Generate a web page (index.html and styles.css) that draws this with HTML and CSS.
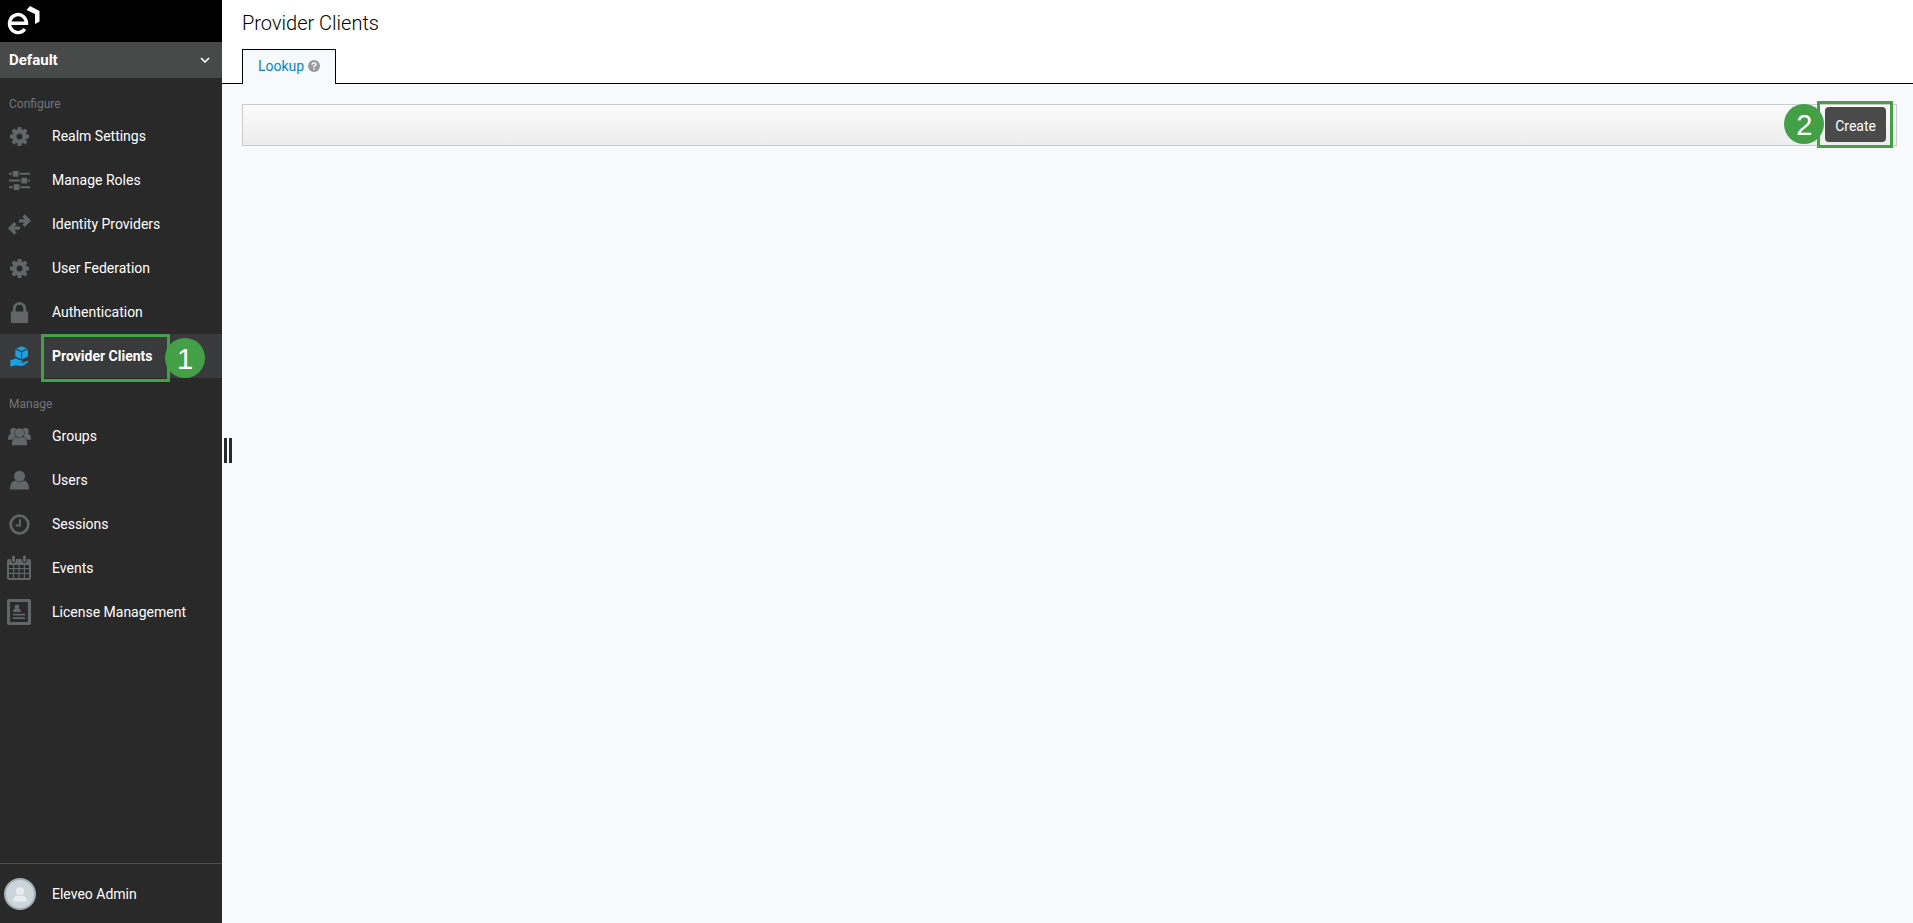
FILE: index.html
```html
<!DOCTYPE html>
<html lang="en">
<head>
    <meta charset="UTF-8">
    <meta name="viewport" content="width=device-width, initial-scale=1.0">
    <title>Provider Clients</title>
    <link rel="stylesheet" href="styles.css">
</head>
<body>
    <!-- Shared icon shapes -->
    <svg class="icon-defs" aria-hidden="true">
        <symbol id="icon-cog" viewBox="0 0 20 20">
            <circle cx="10" cy="10" r="5.300" fill="none" stroke="currentColor" stroke-width="4.400"/>
            <path d="M8.200 0h3.600l.7 4h-5zM8.200 20h3.600l.7-4h-5zM0 8.200v3.600l4 .7v-5zM20 8.200v3.600l-4 .7v-5zM1.700 4.200l2.500-2.500 3.300 2.300L4 7.500zM18.300 4.200l-2.500-2.500L12.500 4 16 7.500zM1.700 15.800l2.500 2.500L7.500 16 4 12.500zM18.300 15.800l-2.500 2.500-3.300-2.300 3.500-3.500z"/>
        </symbol>
    </svg>

    <aside class="sidebar">
        <a class="logo" href="#" aria-label="Eleveo">
            <svg width="33" height="30" viewBox="0 0 33 30">
                <path d="M3 17.300h16.500A8.500 9 0 1 0 17.800 23" fill="none" stroke="#fff" stroke-width="3.400"/>
                <path d="M23 0l9.500 5v10.500l-4.500 2.500V8l-8.500-4z" fill="#fff"/>
            </svg>
        </a>
        <button class="realm" type="button">
            Default
            <svg width="10" height="6" viewBox="0 0 10 6"><path d="M1 1l4 4 4-4" fill="none" stroke="#fff" stroke-width="1.600"/></svg>
        </button>

        <nav class="menu">
            <h2>Configure</h2>
            <ul>
                <li><a href="#"><svg class="icon" viewBox="0 0 24 24"><use href="#icon-cog" x="2" y="2" width="20" height="20"/></svg>Realm Settings</a></li>
                <li><a href="#"><svg class="icon" viewBox="0 0 24 24"><path d="M1 4h22v2H1zM1 11h22v2H1zM1 18h22v2H1z"/><path class="gap" d="M4 2h8v6H4zM13 9h8v6h-8zM5 16h8v6H5z"/><path d="M5 2h6v6H5zM14 9h6v6h-6zM6 16h6v6H6z"/></svg>Manage Roles</a></li>
                <li><a href="#"><svg class="icon" viewBox="0 0 24 24"><path d="M11 10l1-3.500h5.500L15 4l2.500-2.700L24 8l-6.500 6.700L15 12l2.500-2zM13 14l-1 3.500H6.500L9 20l-2.500 2.700L0 16l6.500-6.700L9 12l-2.500 2z"/></svg>Identity Providers</a></li>
                <li><a href="#"><svg class="icon" viewBox="0 0 24 24"><use href="#icon-cog" x="2" y="2" width="20" height="20"/></svg>User Federation</a></li>
                <li><a href="#"><svg class="icon" viewBox="0 0 24 24"><path d="M3 11h18v11q0 1-1 1H4q-1 0-1-1z"/><path d="M6.500 12V8a5.500 5.500 0 0 1 11 0v4" fill="none" stroke="currentColor" stroke-width="3"/></svg>Authentication</a></li>
                <li class="active">
                    <a href="#" aria-current="page"><svg class="icon" viewBox="0 0 24 24"><path d="M14.200 1.300l5.700 2.400-5.700 2.600-5.700-2.600zM7.600 4.600l6.100 2.700v7.500l-6.100-2.700zM20.800 4.600v7.500l-6.100 2.700V7.300z"/><path d="M2.500 15.300h2.800q2.700-2.300 5.200-.2 1.500 1 4 1 1.200.2.800 1.700l-4.300.3 5 .4 3.800-1.700q1.800-.4 1.200 1.200L16.500 21q-1 .8-2.500.8L7.500 21l-5 1.700z"/></svg>Provider Clients</a>
                    <span class="mark mark-menu"><span class="badge">1</span></span>
                </li>
            </ul>

            <h2>Manage</h2>
            <ul>
                <li><a href="#"><svg class="icon" viewBox="0 0 24 24"><circle cx="5.800" cy="6.500" r="3.500"/><circle cx="18.200" cy="6.500" r="3.500"/><path d="M0 15.500q0-6 3-6h5v6zM24 15.500q0-6-3-6h-5v6z"/><path d="M4 21q0-8 5-8.500h6q5 .5 5 8.500z" stroke="#292929" paint-order="stroke"/><circle cx="12" cy="8.200" r="4.800" stroke="#292929" paint-order="stroke"/></svg>Groups</a></li>
                <li><a href="#"><svg class="icon" viewBox="0 0 24 24"><circle cx="12" cy="7.500" r="5.800"/><path d="M2 21.500q0-8.500 5.500-9.500 4.500 3.500 9 0 5.500 1 5.500 9.500z"/></svg>Users</a></li>
                <li><a href="#"><svg class="icon" viewBox="0 0 24 24"><circle cx="12" cy="12" r="9.200" fill="none" stroke="currentColor" stroke-width="2.800"/><path d="M12.500 6.500V13H8" fill="none" stroke="currentColor" stroke-width="2"/></svg>Sessions</a></li>
                <li><a href="#"><svg class="icon icon-large" viewBox="0 0 24 26"><path fill-rule="evenodd" d="M0 6q0-2 2-2h20q2 0 2 2v17q0 2-2 2H2q-2 0-2-2zM2 10v3h4v-3zM7.200 10v3h4.200v-3zM12.600 10v3h4.200v-3zM18 10v3h4v-3zM2 14.200v3.600h4v-3.600zM7.200 14.200v3.600h4.200v-3.600zM12.600 14.200v3.600h4.200v-3.600zM18 14.200v3.600h4v-3.600zM2 19v4h4v-4zM7.200 19v4h4.200v-4zM12.600 19v4h4.200v-4zM18 19v4h4v-4z"/><g class="rings"><rect x="4.500" y="0" width="4" height="7.500" rx="2"/><rect x="15.500" y="0" width="4" height="7.500" rx="2"/></g></svg>Events</a></li>
                <li><a href="#"><svg class="icon icon-large" viewBox="0 0 24 26"><rect x="1.500" y="1.500" width="21" height="23" rx="1" fill="none" stroke="currentColor" stroke-width="3.200"/><circle cx="10" cy="7.800" r="2.400"/><path d="M6 13q0-3.500 2.500-3.500h3q2.500 0 2.500 3.500zM6 14.800h12v1.700H6zM6 18.300h12V20H6z"/></svg>License Management</a></li>
            </ul>
        </nav>

        <a class="account" href="#">
            <span class="avatar"><svg width="16" height="16" viewBox="0 0 16 16"><circle cx="8" cy="5" r="4"/><path d="M1 15.500q0-5 4-6 3 1.500 6 0 4 1 4 6z"/></svg></span>
            Eleveo Admin
        </a>
        <span class="resize-handle"></span>
    </aside>

    <main class="content">
        <header>
            <h1>Provider Clients</h1>
            <div class="tabs">
                <a class="tab" href="#">Lookup
                    <svg width="12" height="12" viewBox="0 0 12 12"><circle cx="6" cy="6" r="6" fill="#999"/><path d="M4 4.600Q4.200 3 6 3t1.900 1.500Q7.900 5.400 6 6.200v1" fill="none" stroke="#f8f9fb" stroke-width="1.600"/><path d="M5.200 8.200h1.600v1.500H5.200z" fill="#f8f9fb"/></svg>
                </a>
            </div>
        </header>
        <div class="toolbar">
            <div class="action">
                <button class="create" type="button">Create</button>
                <span class="mark mark-create"><span class="badge">2</span></span>
            </div>
        </div>
    </main>
</body>
</html>
```

FILE: styles.css
```css
* {
    box-sizing: border-box;
}

body {
    margin: 0;
    min-height: 100vh;
    display: flex;
    font-family: Roboto, "Liberation Sans", sans-serif;
    font-size: 14px;
    line-height: 20px;
    background-color: #f8f9fb;
}

a {
    color: inherit;
    text-decoration: none;
}

button {
    font: inherit;
    color: #fff;
    border: none;
    cursor: pointer;
}

.icon-defs {
    position: absolute;
    width: 0;
    height: 0;
}

/* Sidebar */
.sidebar {
    position: relative;
    width: 222px;
    flex-shrink: 0;
    display: flex;
    flex-direction: column;
    background-color: #292929;
    color: #fff;
}

.logo {
    height: 42px;
    padding: 6px 7px;
    background-color: #000;
}

.logo svg {
    display: block;
}

.realm {
    display: flex;
    justify-content: space-between;
    align-items: center;
    height: 36px;
    padding: 0 12px 0 9px;
    font-size: 15px;
    font-weight: bold;
    background-color: #484949;
}

.menu {
    flex: 1;
}

.menu h2 {
    margin: 0;
    padding: 16px 9px 0;
    font-size: 12px;
    font-weight: normal;
    color: #72767b;
}

.menu ul {
    list-style: none;
    margin: 0;
    padding: 0;
}

.menu li {
    position: relative;
}

.menu li a {
    display: flex;
    align-items: center;
    gap: 21px;
    height: 44px;
    padding-left: 8px;
}

.icon {
    width: 23px;
    height: 23px;
    color: #636667;
    fill: currentColor;
}

.icon-large {
    width: 24px;
    height: 26px;
    margin: 0 0 0 -1px;
}

.icon .gap {
    fill: #292929;
}

.icon .rings {
    stroke: #292929;
}

.menu .active {
    background-color: #393a3c;
    font-weight: bold;
}

.active .icon {
    color: #1ba1e2;
}

.account {
    display: flex;
    align-items: center;
    gap: 16px;
    height: 60px;
    padding-left: 4px;
    border-top: 1px solid #4d4d4d;
}

.avatar {
    display: flex;
    align-items: center;
    justify-content: center;
    width: 32px;
    height: 32px;
    border: 2px solid #a3afb5;
    border-radius: 50%;
    background-color: #cbd5da;
}

.avatar svg {
    fill: #e9edef;
}

.resize-handle {
    position: absolute;
    left: 224px;
    top: 438px;
    width: 8px;
    height: 25px;
    border: solid #292929;
    border-width: 0 3px;
    cursor: col-resize;
}

/* Numbered callouts */
.mark {
    position: absolute;
    border: 3px solid #43a047;
    pointer-events: none;
}

.mark-menu {
    left: 41px;
    top: 0;
    width: 129px;
    height: 48px;
    z-index: 1;
}

.mark-create {
    top: -6px;
    right: -7px;
    bottom: -6px;
    left: -8px;
}

.badge {
    position: absolute;
    top: 1px;
    left: 121px;
    width: 40px;
    height: 40px;
    border-radius: 50%;
    background-color: #43a047;
    color: #fff;
    font-family: "Liberation Sans", sans-serif;
    font-size: 29px;
    font-weight: normal;
    line-height: 42px;
    text-align: center;
}

.mark-create .badge {
    top: 0;
    left: -36px;
}

/* Content */
.content {
    flex: 1;
}

.content header {
    height: 84px;
    display: flex;
    flex-direction: column;
    justify-content: space-between;
    background-color: #fff;
}

.content h1 {
    margin: 0;
    padding: 11px 20px 0;
    font-size: 20px;
    font-weight: 300;
    line-height: 24px;
    color: #000;
}

.tabs {
    display: flex;
    padding-left: 20px;
    box-shadow: inset 0 -1px #000;
}

.tab {
    display: flex;
    align-items: center;
    gap: 4px;
    height: 35px;
    padding: 0 15px 2px;
    border: 1px solid #000;
    border-bottom: none;
    background-color: #f8f9fb;
    color: #0088ce;
}

.toolbar {
    display: flex;
    justify-content: flex-end;
    margin: 20px 16px 0 20px;
    padding: 2px 10px 3px;
    border: 1px solid #ccc;
    background: linear-gradient(#fafafa, #ededed);
}

.action {
    position: relative;
    display: flex;
}

.create {
    height: 35px;
    padding: 2px 10px 0;
    border-radius: 4px;
    background-color: #4a4a4a;
}
```
